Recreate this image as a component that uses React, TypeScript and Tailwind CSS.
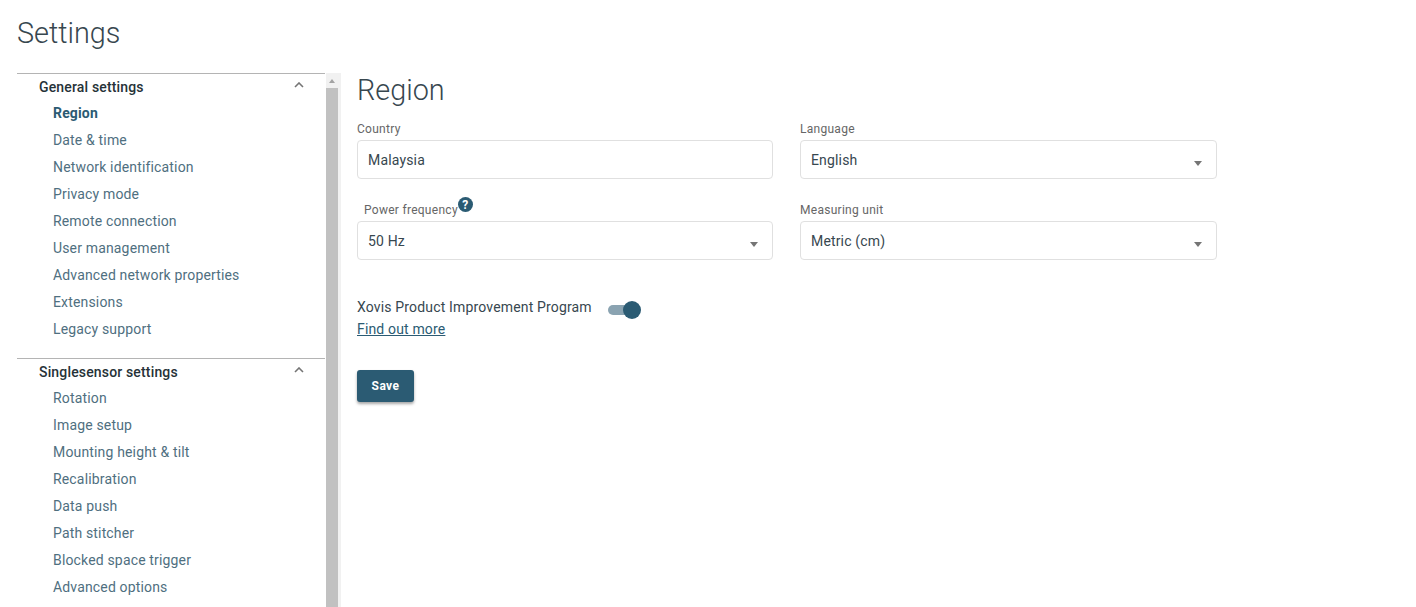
import React from 'react';

const GENERAL = [
  'Region',
  'Date & time',
  'Network identification',
  'Privacy mode',
  'Remote connection',
  'User management',
  'Advanced network properties',
  'Extensions',
  'Legacy support',
];

const SINGLESENSOR = [
  'Rotation',
  'Image setup',
  'Mounting height & tilt',
  'Recalibration',
  'Data push',
  'Path stitcher',
  'Blocked space trigger',
  'Advanced options',
];

const Chevron: React.FC = () => (
  <svg width="10" height="6" viewBox="0 0 10 6" fill="none" className="absolute right-[21px] top-[8px]">
    <path d="M1 5l4-4 4 4" stroke="#757575" strokeWidth="1.6" />
  </svg>
);

const NavGroup: React.FC<{ title: string; items: string[]; active?: string }> = ({ title, items, active }) => (
  <div className="relative border-t border-[#b4b4b4] pl-[22px] pb-[14px]">
    <Chevron />
    <div className="h-[27px] pt-[4px] text-[14px] leading-[19px] font-medium tracking-[0.16px] text-[#263238]">{title}</div>
    <ul className="pl-[14px]">
      {items.map((item) => (
        <li
          key={item}
          className={
            item === active
              ? 'h-[27px] text-[14px] leading-[25px] font-bold tracking-[0.16px] text-[#2b5b73]'
              : 'h-[27px] text-[14px] leading-[25px] tracking-[0.16px] text-[#4f6f7f]'
          }
        >
          {item}
        </li>
      ))}
    </ul>
  </div>
);

const Field: React.FC<{ label: string; value: string; select?: boolean; help?: boolean }> = ({
  label,
  value,
  select,
  help,
}) => (
  <div>
    <div className={help ? 'flex h-[25px] pl-[7px] pt-[6px] text-[12px] leading-[16px] tracking-[0.28px] text-[#666]' : 'h-[25px] pt-[6px] text-[12px] leading-[16px] tracking-[0.28px] text-[#666]'}>
      {label}
      {help && (
        <span className="mt-[-5px] flex h-[15px] w-[15px] items-center justify-center rounded-full bg-[#2b5b73] text-[12px] font-bold leading-none tracking-normal text-white">
          ?
        </span>
      )}
    </div>
    <div className="relative h-[39px] rounded-[4px] border border-[#e0e0e0] bg-white pl-[10px] text-[14px] leading-[38px] tracking-[0.16px] text-[#37474f]">
      {value}
      {select && <span className="absolute right-[14px] top-[20px] h-0 w-0 border-x-[4px] border-t-[5px] border-x-transparent border-t-[#757575]" />}
    </div>
  </div>
);

export default function App() {
  return (
    <div className="h-[607px] overflow-hidden bg-white font-['Roboto',sans-serif]">
      <h1 className="h-[73px] pl-[17px] pt-[14px] text-[28.8px] leading-[38px] font-light text-[#37474f]">Settings</h1>
      <div className="flex pl-[17px]">
        <nav className="w-[308px]">
          <NavGroup title="General settings" items={GENERAL} active="Region" />
          <NavGroup title="Singlesensor settings" items={SINGLESENSOR} />
        </nav>
        <div className="ml-[1px] flex h-[534px] w-[15px] flex-col bg-[#f1f1f1]">
          <div className="flex h-[15px] w-full shrink-0 items-center pl-[3px]">
            <span className="h-0 w-0 border-x-[3px] border-b-[4px] border-x-transparent border-b-[#a3a3a3]" />
          </div>
          <div className="w-[12px] flex-1 bg-[#c1c1c1]" />
        </div>
        <main className="pl-[16px]">
          <h2 className="h-[42px] pt-[1px] text-[28.8px] leading-[33px] font-light text-[#37474f]">Region</h2>
          <div className="grid w-[860px] grid-cols-[416px_417px] gap-x-[27px] gap-y-[17px]">
            <Field label="Country" value="Malaysia" />
            <Field label="Language" value="English" select />
            <Field label="Power frequency" value="50 Hz" select help />
            <Field label="Measuring unit" value="Metric (cm)" select />
          </div>
          <div className="mt-[37px] flex items-center">
            <span className="text-[14px] leading-[21px] tracking-[0.16px] text-[#37474f]">Xovis Product Improvement Program</span>
            <span className="relative top-[2px] ml-[16px] block h-[10px] w-[30px] rounded-full bg-[#8aa3b1]">
              <span className="absolute right-[-3px] top-[-4px] h-[18px] w-[18px] rounded-full bg-[#2b5b73]" />
            </span>
          </div>
          <a className="block text-[14px] leading-[22px] tracking-[0.16px] text-[#2b5b73] underline">Find out more</a>
          <button className="mt-[30px] h-[32px] w-[57px] rounded-[3px] bg-[#2b5b73] text-[12px] font-bold tracking-[0.4px] text-white shadow-[0_2px_3px_rgba(0,0,0,0.35)]">
            Save
          </button>
        </main>
      </div>
    </div>
  );
}
